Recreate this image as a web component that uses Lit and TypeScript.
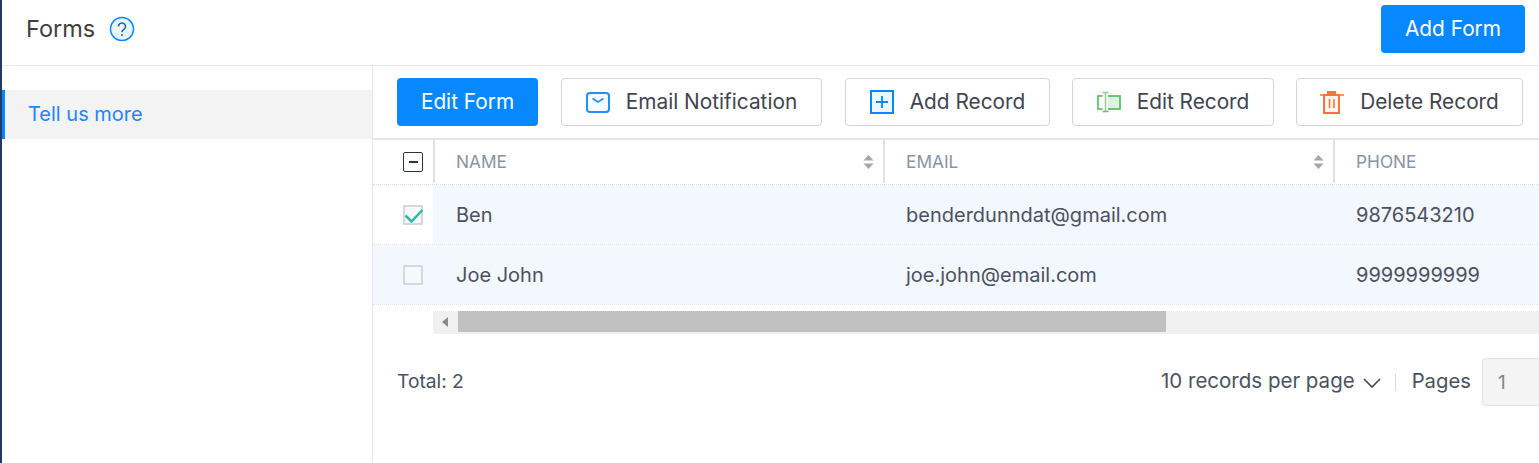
import { LitElement, html, css } from "lit";
import { customElement } from "lit/decorators.js";

const sortIcon = html`<svg class="sort" width="11" height="16" viewBox="0 0 11 16"><path d="M5.500 1l5 5.500h-10z" fill="#a3a8b0"/><path d="M5.500 15l5-5.500h-10z" fill="#a3a8b0"/></svg>`;

@customElement("app-root")
export class AppRoot extends LitElement {
  static styles = css`
    :host { display: block; width: 1539px; height: 463px; overflow: hidden; background: #fff; font-family: Inter, "Noto Sans", sans-serif; color: #40444f; border-left: 2px solid #1f3a66; box-sizing: border-box; }
    .top { display: flex; align-items: center; justify-content: space-between; height: 48px; border-bottom: 1px solid #e6e6e6; padding: 5px 14px 12px 24px; box-sizing: content-box; }
    .title { display: flex; align-items: center; gap: 14px; font-size: 23.500px; color: #3f3f3f; }
    .title span { padding-bottom: 2px; }
    .btn { display: flex; align-items: center; justify-content: center; height: 48px; padding: 0 0 2px; border-radius: 4px; box-sizing: border-box; font-size: 20.800px; white-space: nowrap; font-family: inherit; }
    .btn svg { flex: none; margin-top: 2px; }
    .primary { background: #0788ff; color: #fff; border: none; }
    .add { width: 144px; }
    .edit { width: 141px; }
    .outline { background: #fff; border: 1px solid #d4d4d4; color: #40444f; gap: 16px; }
    .w-mail { width: 261px; margin-left: 23px; }
    .w-add { width: 205px; margin-left: 23px; }
    .w-edit { width: 202px; margin-left: 22px; }
    .w-del { width: 227px; margin-left: 22px; }
    .body { display: flex; height: 397px; }
    .side { width: 370px; flex: none; border-right: 1px solid #e6e6e6; padding-top: 24px; box-sizing: content-box; }
    .item { height: 49px; box-sizing: border-box; border-left: 3px solid #0788ff; background: #f3f3f3; color: #1e86ff; font-size: 20px; display: flex; align-items: center; padding: 0 0 2px 23px; }
    .main { flex: 1; min-width: 0; overflow: hidden; }
    .bar { display: flex; height: 72px; padding: 12px 0 0 24px; box-sizing: border-box; }
    .head { display: grid; grid-template-columns: 60px 450px 450px 1fr; height: 47px; padding-bottom: 1px; border-top: 2px solid #e6e6e6; border-bottom: 1px dotted #d8dde6; box-sizing: border-box; }
    .hc { display: flex; align-items: center; justify-content: space-between; padding: 0 9px 0 21px; border-left: 2px solid #e2e2e2; font-size: 17.300px; color: #8893a3; }
    .cbc { display: flex; align-items: center; justify-content: center; }
    .box { width: 20px; height: 20px; box-sizing: border-box; border: 2px solid #d3d7de; background: #f7f8fa; border-radius: 1px; display: flex; align-items: center; justify-content: center; position: relative; }
    .minus { border: 1.500px solid #2c3342; background: #fff; border-radius: 2px; }
    .minus::after { content: ""; width: 9px; height: 2px; background: #2c3342; }
    .check { position: absolute; left: -1px; top: 1px; }
    .row { display: grid; grid-template-columns: 60px 451px 450px 1fr; height: 60px; border-bottom: 1px dotted #dfe3ea; box-sizing: border-box; font-size: 20px; color: #4b5160; }
    .row > div { display: flex; align-items: center; padding-left: 22px; background: #f3f7fe; white-space: nowrap; }
    .row > div.name { padding-left: 23px; }
    .row > .cbc { padding: 0 0 0 20px; justify-content: center; }
    .head > .cbc { padding-left: 20px; }
    .row.sel > .cbc { background: #fff; }
    .track { margin: 6px 0 0 60px; height: 23px; background: #f0f0f0; display: flex; align-items: flex-start; }
    .arr { width: 25px; height: 21px; flex: none; display: flex; align-items: center; justify-content: center; padding-right: 2px; box-sizing: border-box; }
    .thumb { width: 708px; height: 21px; background: #c0c0c0; }
    .foot { display: flex; align-items: center; justify-content: space-between; margin-top: 24px; height: 48px; padding-left: 24px; font-size: 19.200px; color: #4b5160; }
    .total { padding-bottom: 2px; }
    .right { display: flex; align-items: center; width: 379px; flex: none; margin-right: -1px; }
    .per { font-size: 20.500px; display: flex; align-items: center; gap: 8px; white-space: nowrap; padding-bottom: 4px; }
    .per svg { margin-top: 5px; }
    .sep { width: 1px; height: 17px; background: #d8d8d8; margin: 0 16px 0 14px; flex: none; }
    .pg { font-size: 20.300px; margin-right: 11px; padding-bottom: 4px; }
    .inp { width: 70px; height: 48px; flex: none; box-sizing: border-box; border: 1px solid #e2e2e2; border-radius: 4px; background: #f4f4f4; color: #7d8490; font-size: 19px; display: flex; align-items: center; padding-left: 15px; }
  `;

  render() {
    return html`
      <div class="top">
        <div class="title">
          <span>Forms</span>
          <svg width="26" height="26" viewBox="0 0 26 26"><circle cx="13" cy="13" r="11.500" fill="#e9f4fd" stroke="#0788ff" stroke-width="1.500"/><path d="M9.500 10.500a3.500 3.500 0 1 1 5.400 2.900c-1.200.8-1.900 1.300-1.900 2.800" fill="none" stroke="#1a5fa8" stroke-width="1.500"/><circle cx="13" cy="19" r="1" fill="#1a5fa8"/></svg>
        </div>
        <button class="btn primary add">Add Form</button>
      </div>
      <div class="body">
        <div class="side"><div class="item">Tell us more</div></div>
        <div class="main">
          <div class="bar">
            <button class="btn primary edit">Edit Form</button>
            <button class="btn outline w-mail">
              <svg width="24" height="21" viewBox="0 0 24 21"><rect x="1" y="1" width="22" height="19" rx="3" fill="#f8fbff" stroke="#1e90ff" stroke-width="2"/><path d="M6.500 6.500l5.500 3.500 5.500-3.500" fill="none" stroke="#1e90ff" stroke-width="1.600"/></svg>
              <span>Email Notification</span>
            </button>
            <button class="btn outline w-add">
              <svg width="24" height="24" viewBox="0 0 24 24"><rect x="1" y="1" width="22" height="22" fill="#eef6fe" stroke="#0788ff" stroke-width="2"/><path d="M12 6v12M6 12h12" stroke="#0788ff" stroke-width="1.800"/></svg>
              <span>Add Record</span>
            </button>
            <button class="btn outline w-edit">
              <svg width="24" height="22" viewBox="0 0 24 22"><rect x="1" y="5" width="22" height="13" fill="#dff2e1" stroke="#5cc266" stroke-width="1.800"/><rect x="1.900" y="5.900" width="9" height="11.200" fill="#fff"/><rect x="5.500" y="2" width="5.500" height="19" fill="#fff"/><path d="M8.500 2v18M5.500 1.500h6" stroke="#8fcf94" stroke-width="1.500"/><path d="M5.500 20.500h6" stroke="#5cc266" stroke-width="1.500"/></svg>
              <span>Edit Record</span>
            </button>
            <button class="btn outline w-del">
              <svg width="24" height="25" viewBox="0 0 24 25"><path d="M7 1h9v4H7z" fill="#f0763e"/><path d="M0 5h24" stroke="#f0763e" stroke-width="1.500"/><path d="M4 5h15v18H4z" fill="#fff3ea" stroke="#f0763e" stroke-width="2"/><path d="M9.500 9v9M14 9v9" stroke="#f0763e" stroke-width="1.500"/></svg>
              <span>Delete Record</span>
            </button>
          </div>
          <div class="head">
            <div class="cbc"><div class="box minus"></div></div>
            <div class="hc"><span>NAME</span>${sortIcon}</div>
            <div class="hc"><span>EMAIL</span>${sortIcon}</div>
            <div class="hc"><span>PHONE</span></div>
          </div>
          <div class="row sel">
            <div class="cbc"><div class="box">
              <svg class="check" width="21" height="16" viewBox="0 0 21 16"><path d="M1.500 7.500l6 6L18.500 2" fill="none" stroke="#2eb8a6" stroke-width="2.500"/></svg>
            </div></div>
            <div class="name">Ben</div><div>benderdunndat@gmail.com</div><div>9876543210</div>
          </div>
          <div class="row">
            <div class="cbc"><div class="box"></div></div>
            <div class="name">Joe John</div><div>joe.john@email.com</div><div>9999999999</div>
          </div>
          <div class="track">
            <div class="arr"><svg width="6" height="10" viewBox="0 0 6 10"><path d="M6 0v10L0 5z" fill="#8a8a8a"/></svg></div>
            <div class="thumb"></div>
          </div>
          <div class="foot">
            <span class="total">Total: 2</span>
            <div class="right">
              <span class="per">10 records per page
                <svg width="18" height="10" viewBox="0 0 18 10"><path d="M1 1l8 8 8-8" fill="none" stroke="#3f4450" stroke-width="1.600"/></svg></span>
              <span class="sep"></span>
              <span class="pg">Pages</span>
              <div class="inp">1</div>
            </div>
          </div>
        </div>
      </div>
    `;
  }
}
